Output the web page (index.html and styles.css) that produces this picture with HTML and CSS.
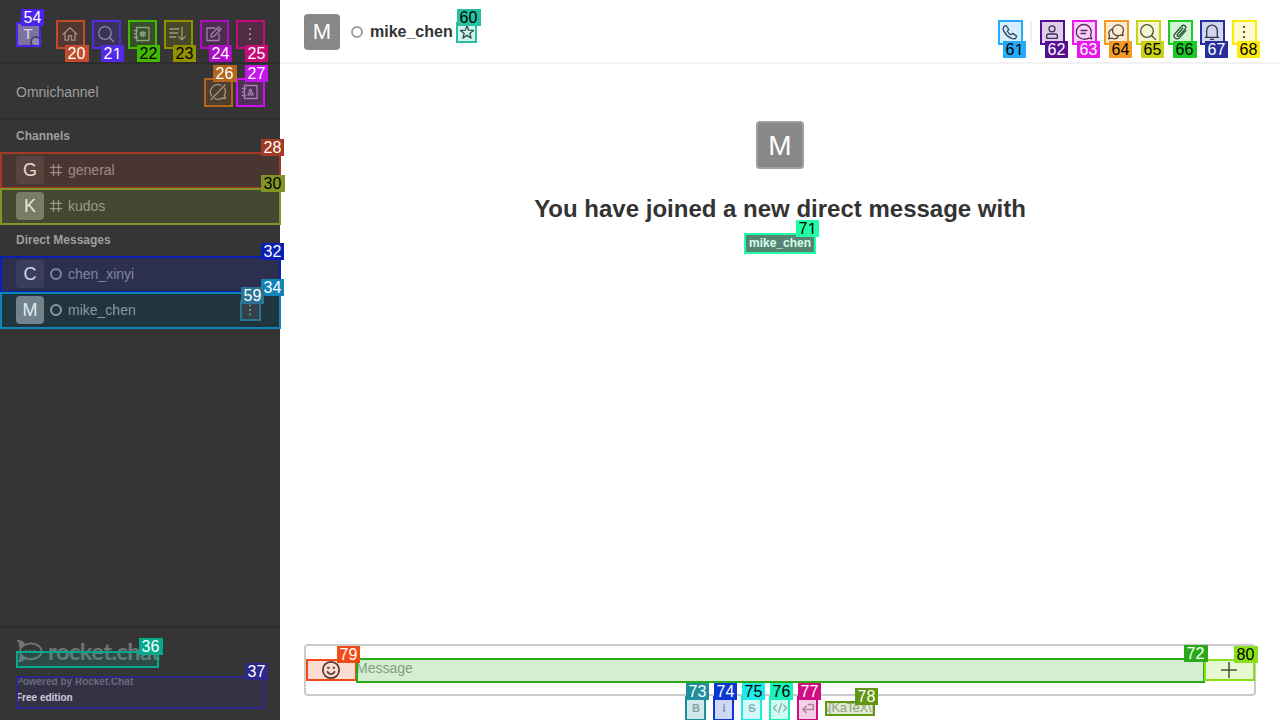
FILE: index.html
```html
<!DOCTYPE html>
<html lang="en">
<head>
<meta charset="utf-8">
<title>Rocket.Chat</title>
<link rel="stylesheet" href="styles.css">
</head>
<body>
<div class="app">
  <aside class="sidebar">
    <header class="side-head">
      <div class="avatar me">T<i class="badge"></i></div>
      <nav class="tools">
        <svg class="icon" viewBox="0 0 20 20"><path d="M3 10.3 10 3.8l7 6.5M5 9v7.2h3.500v-4.500h3v4.500H15V9"/></svg>
        <svg class="icon" viewBox="0 0 20 20"><circle cx="9" cy="9" r="6.300"/><path d="m13.500 13.500 4 4"/></svg>
        <svg class="icon" viewBox="0 0 20 20"><path d="M4.500 3.500h12.500v13H4.500zM2.300 6.500h3.400M2.300 13.500h3.400M2.300 10h2M9.500 7.500v5M11.800 7.500v5M8 9h5.500M8 11.200h5.500"/></svg>
        <svg class="icon" viewBox="0 0 20 20"><path d="M1.800 5h9M1.800 9h8M1.800 13h6M14 3.500v12M10.800 12.600l3.200 3.200 3.200-3.200"/></svg>
        <svg class="icon" viewBox="0 0 20 20"><path d="M11 4H3v12.500h12V10M7 13l.6-3 7-7 2.400 2.300-7 7zM13 4.800l2.300 2.200"/></svg>
        <svg class="icon dots" viewBox="0 0 20 20"><path d="M9 4h2v2H9zM9 9h2v2H9zM9 14h2v2H9z"/></svg>
      </nav>
    </header>
    <section class="omni">
      <span>Omnichannel</span>
      <nav class="tools">
        <svg class="icon" viewBox="0 0 20 20"><path d="M13 3.300A7.300 7.300 0 0 0 3.800 14M6.500 16.500c2.300 1.100 5.500 1 7.500-.5l3.500.5-1.200-3.300c1.400-2.200 1.300-5 .3-7M3 17.500 17 3"/></svg>
        <svg class="icon" viewBox="0 0 20 20"><path d="M4.500 3.500h12.500v13H4.500zM2.300 6.500h3.400M2.300 13.500h3.400M2.300 10h2M8 12.800v-1l1.300-1h2.400l1.300 1v1z"/><circle cx="10.500" cy="8.500" r="1.200"/></svg>
      </nav>
    </section>
    <h3 class="group">Channels</h3>
    <div class="room"><span class="avatar">G</span><svg class="sym" viewBox="0 0 12 12"><path d="M3.500 0v12M8.500 0v12M0 3.300h12M0 8.700h12"/></svg><span>general</span></div>
    <div class="room"><span class="avatar lite">K</span><svg class="sym" viewBox="0 0 12 12"><path d="M3.500 0v12M8.500 0v12M0 3.300h12M0 8.700h12"/></svg><span>kudos</span></div>
    <h3 class="group">Direct Messages</h3>
    <div class="room"><span class="avatar">C</span><i class="ring"></i><span>chen_xinyi</span></div>
    <div class="room current"><span class="avatar pale">M</span><i class="ring"></i><span>mike_chen</span><svg class="icon dots menu" viewBox="0 0 20 20"><path d="M9.200 4.500H11v1.800H9.200zM9.200 9H11v1.800H9.200zM9.200 13.500H11v1.800H9.200z"/></svg></div>
    <footer class="side-foot">
      <div class="brand">
        <svg class="logo" viewBox="0 0 28 26"><ellipse cx="14.800" cy="13.300" rx="10.800" ry="7.900"/><path class="fin" d="M.5 2.300C4 1.500 7 3 9 5.500L4.500 10.500 3 8.500C3.500 6 2.500 4 .5 2.300zM1 23.800c2-1.500 3-3.500 2.300-6.300l1.700-1.500 4.500 5C7.500 23.500 4.500 25 1 23.800z"/><circle cx="9.800" cy="13" r=".6"/><circle cx="14.300" cy="13" r=".6"/><circle cx="18.800" cy="13" r=".6"/></svg>
        <span class="wordmark">rocket.chat</span>
      </div>
      <p class="powered">Powered by Rocket.Chat</p>
      <p class="edition">Free edition</p>
    </footer>
  </aside>

  <main class="main">
    <header class="room-head">
      <span class="avatar large">M</span>
      <i class="ring"></i>
      <h1 class="name">mike_chen</h1>
      <svg class="star" viewBox="0 0 16 16"><path d="m8 1.800 1.700 4.400 4.800.200-3.700 3 1.300 4.700L8 11.400l-4.100 2.700 1.300-4.700-3.700-3 4.800-.200z"/></svg>
      <nav class="actions">
        <svg class="icon phone" viewBox="0 0 20 20"><path d="M3.700 4.600 6 3.500l2.700 3.900-1.400 1.900c.9 1.600 1.900 2.600 3.500 3.500l1.900-1.400 3.900 2.700-1 2.300c-1.300.8-3.100.5-4.600-.2-3.300-1.600-5.500-3.800-7.100-7.100C3.200 7.500 2.900 5.900 3.700 4.600z"/></svg>
        <i class="sep"></i>
        <svg class="icon" viewBox="0 0 20 20"><circle cx="10" cy="6.800" r="3"/><path d="M4.700 16.300V14q0-2 2-2h6.600q2 0 2 2v2.300z"/></svg>
        <svg class="icon" viewBox="0 0 20 20"><path d="M17.800 16.800 15 16.200C9.500 19 2.300 15.500 2.300 10a7.500 7.500 0 0 1 15 0c0 1.300-.4 2.500-.8 3.500zM7 8.500h6M7 11.500h4.500"/></svg>
        <svg class="icon" viewBox="0 0 20 20"><path d="M17 13.500l-2.500-.5c-4 1.800-8-.5-8-4.700a5.500 5.500 0 0 1 11 0c0 1-.3 1.900-.9 2.600zM6 7.200c-2.700 1.300-3.800 4-2.500 6.800l-.8 2.800 3.200-.6c2.800 1.200 5.400.5 6.600-2.200"/></svg>
        <svg class="icon" viewBox="0 0 20 20"><circle cx="9" cy="9" r="6.300"/><path d="m13.500 13.500 4 4"/></svg>
        <svg class="icon" viewBox="0 0 20 20"><path d="m12.800 6.300-5.400 6.200c-1 1.300.6 2.600 1.700 1.400l5.900-6.700c2.200-2.700-1-5.300-3.300-3L5.100 11.500c-3 3.600 1.200 7.300 4.500 4.100l6.200-7"/></svg>
        <svg class="icon" viewBox="0 0 20 20"><path d="M3.300 15.300h13.400M4.700 15V8.500a5.300 5.300 0 0 1 10.600 0V15M8.500 17.300h3"/></svg>
        <svg class="icon dots" viewBox="0 0 20 20"><path d="M9 4h2v2H9zM9 9h2v2H9zM9 14h2v2H9z"/></svg>
      </nav>
    </header>
    <section class="intro">
      <span class="avatar hero">M</span>
      <h2 class="title">You have joined a new direct message with</h2>
      <span class="user">mike_chen</span>
    </section>
    <div class="composer">
      <svg class="emoji" viewBox="0 0 20 20"><circle cx="10" cy="10" r="8.200"/><path d="M6.500 11.800c1.300 3 5.700 3 7 0"/><circle cx="7.200" cy="7.800" r=".7"/><circle cx="12.800" cy="7.800" r=".7"/></svg>
      <span class="input">Message</span>
      <svg class="plus" viewBox="0 0 20 20"><path d="M10 2.500v15M2.500 10h15"/></svg>
    </div>
    <div class="format">
      <b>B</b><b>i</b><b><s>S</s></b>
      <svg viewBox="0 0 16 16"><path d="M4.300 5 1.500 8l2.800 3M11.700 5l2.800 3-2.800 3M9.500 3.500l-3 9"/></svg>
      <svg class="enter" viewBox="0 0 16 16"><path d="M6 6.500 3 9.500l3 3M3 9.500h10.300V4.500H8.500"/></svg>
      <span class="katex">\[KaTeX\]</span>
    </div>
  </main>
</div>

<div class="marks">
  <div class="box b54"></div><div class="box b20"></div><div class="box b21"></div><div class="box b22"></div><div class="box b23"></div><div class="box b24"></div><div class="box b25"></div><div class="box b26"></div><div class="box b27"></div>
  <div class="box b28"></div><div class="box b30"></div><div class="box b32"></div><div class="box b34"></div><div class="box b59"></div><div class="box b36"></div><div class="box b37"></div>
  <div class="box b60"></div><div class="box b61"></div><div class="box b62"></div><div class="box b63"></div><div class="box b64"></div><div class="box b65"></div><div class="box b66"></div><div class="box b67"></div><div class="box b68"></div>
  <div class="box b71"></div><div class="box b79"></div><div class="box b72"></div><div class="box b80"></div><div class="box b73"></div><div class="box b74"></div><div class="box b75"></div><div class="box b76"></div><div class="box b77"></div><div class="box b78"></div>
  <span class="tag t54">54</span><span class="tag t20">20</span><span class="tag t21">2<span class="one">1</span></span><span class="tag dark t22">22</span><span class="tag dark t23">23</span><span class="tag t24">24</span><span class="tag t25">25</span><span class="tag t26">26</span><span class="tag t27">27</span>
  <span class="tag t28">28</span><span class="tag dark t30">30</span><span class="tag t32">32</span><span class="tag t34">34</span><span class="tag t59">59</span><span class="tag t36">36</span><span class="tag t37">37</span>
  <span class="tag dark t60">60</span><span class="tag dark t61">6<span class="one">1</span></span><span class="tag t62">62</span><span class="tag t63">63</span><span class="tag dark t64">64</span><span class="tag dark t65">65</span><span class="tag dark t66">66</span><span class="tag t67">67</span><span class="tag dark t68">68</span>
  <span class="tag dark t71">7<span class="one">1</span></span><span class="tag t72">72</span><span class="tag t79">79</span><span class="tag dark t80">80</span><span class="tag t73">73</span><span class="tag t74">74</span><span class="tag dark t75">75</span><span class="tag dark t76">76</span><span class="tag t77">77</span><span class="tag t78">78</span>
</div>
</body>
</html>
```
FILE: styles.css
```css
* { box-sizing: border-box; margin: 0; padding: 0; }
body { width: 1280px; height: 720px; overflow: hidden; font: 14px/20px "Liberation Sans", Arial, sans-serif; background: #fff; }
svg { flex: none; fill: none; stroke: currentColor; stroke-width: 1.3; stroke-linecap: round; stroke-linejoin: round; }
i { display: block; flex: none; }
.app { display: flex; height: 720px; }

.sidebar { width: 280px; flex: none; display: flex; flex-direction: column; background: #353535; color: #9e9e9e; }
.side-head { display: flex; justify-content: space-between; align-items: center; height: 64px; padding: 6px 16px 0; border-bottom: 2px solid #2d2d2d; }
.tools { display: flex; gap: 8px; }
.icon { width: 20px; height: 20px; }
.tools .icon { width: 28px; height: 28px; padding: 4px; }
.dots { fill: currentColor; stroke: none; }
.avatar { display: flex; flex: none; align-items: center; justify-content: center; width: 28px; height: 28px; border-radius: 4px; background: #464646; color: #fff; font-size: 18px; }
.me { position: relative; width: 24px; height: 24px; background: #888; font-size: 15px; border-radius: 2px; }
.badge { position: absolute; left: 14px; top: 14px; width: 12px; height: 12px; border: 2px solid #4a4a4a; border-radius: 50%; background: #a4a4a4; }
.omni { display: flex; justify-content: space-between; align-items: center; height: 56px; padding: 2px 16px 0; border-bottom: 2px solid #2d2d2d; }
.omni .tools { gap: 4px; }
.group { height: 32px; padding: 0 16px; font-size: 12px; line-height: 32px; }
.room { display: flex; align-items: center; height: 36px; padding: 0 20px 0 16px; color: #9e9e9e; }
.current { background: #24292b; }
.lite { background: #777; }
.pale { background: #848484; }
.sym { width: 12px; height: 12px; margin: 0 6px; stroke-width: 1.2; stroke-linecap: butt; }
.ring { width: 12px; height: 12px; margin: 0 6px; border: 2px solid #9e9e9e; border-radius: 50%; }
.menu { margin-left: auto; }
.side-foot { margin-top: auto; height: 94px; padding: 10px 16px 0; border-top: 2px solid #2d2d2d; font-size: 10px; font-weight: bold; line-height: 16px; }
.brand { display: flex; align-items: center; gap: 4px; height: 26px; margin-bottom: 10px; color: #747474; }
.logo { width: 28px; height: 26px; stroke-width: 2; }
.logo circle { fill: currentColor; stroke-width: 1; }
.fin { fill: currentColor; stroke: none; }
.wordmark { font: 700 23.5px/24px Lato, sans-serif; letter-spacing: -.5px; }
.powered { color: #7c7c7c; }
.edition { color: #f2f2f2; }

.main { flex: 1; display: flex; flex-direction: column; color: #2f343d; }
.room-head { display: flex; align-items: center; height: 64px; padding: 2px 26px 0 24px; border-bottom: 2px solid #f2f2f2; }
.large { width: 36px; height: 36px; background: #888; color: #fff; font-size: 22px; }
.room-head .ring { margin: 0 7px 0 11px; }
.name { font-size: 16px; line-height: 24px; color: #333; }
.star { width: 16px; height: 16px; margin-left: 6px; }
.actions { display: flex; align-items: center; gap: 12px; margin-left: auto; }
.phone { margin-right: -2px; }
.sep { width: 2px; height: 20px; margin: 0 -2px 0 0; background: #eee; }
.intro { flex: 1; display: flex; flex-direction: column; align-items: center; padding-top: 57px; }
.hero { width: 48px; height: 48px; padding-top: 1px; border: 2px solid #a0a0a0; background: #888; color: #fff; font-size: 28px; }
.title { margin-top: 24px; font-size: 24px; line-height: 32px; color: #333; }
.user { margin-top: 9px; padding: 0 4px; height: 19px; background: #666; color: #fff; font: bold 12px/18px "Liberation Sans", sans-serif; }
.composer { display: flex; align-items: center; height: 52px; margin: 0 24px; padding: 0 15px; border: 2px solid #cbcbcb; border-radius: 4px; }
.emoji, .plus { width: 20px; height: 20px; stroke-width: 1.7; }
.emoji circle + path ~ circle { fill: currentColor; stroke-width: 1; }
.plus { stroke-width: 1.5; }
.input { flex: 1; margin-left: 15px; padding-bottom: 4px; color: #9b9b9b; }
.format { display: flex; align-items: center; gap: 12px; height: 24px; padding-left: 408px; color: #a5a5a5; font-size: 11px; }
.format b, .format svg { width: 16px; height: 16px; text-align: center; line-height: 17px; }
.format .enter { stroke-width: 1.7; }
.katex { margin-left: -3px; font-size: 13px; line-height: 20px; letter-spacing: -.4px; white-space: nowrap; }

.marks { position: absolute; inset: 0; overflow: hidden; }
.box { position: absolute; width: 25px; height: 25px; top: 20px; border: 2px solid var(--c); background: color-mix(in srgb, var(--c) 20%, transparent); background-clip: padding-box; }
.tag { position: absolute; width: 23px; height: 17px; padding-left: 2.5px; background: var(--c); color: #fff; font: 16px/17px "Liberation Sans", Arial, sans-serif; white-space: nowrap; }
.one { font: 15px/15px Inter, sans-serif; margin-left: 1px; }
.dark { color: #000; }
.b20, .b21, .b22, .b23, .b24, .b25, .b26, .b27 { width: 29px; height: 29px; }
.t20, .t21, .t22, .t23, .t24, .t25 { top: 45px; }
.b26, .b27 { top: 78px; } .t26, .t27 { top: 65px; }
.b28, .b30, .b32, .b34 { left: 0; width: 281px; height: 37px; }
.t28, .t30, .t32, .t34 { left: 261px; }
.t61, .t62, .t63, .t64, .t65, .t66, .t67, .t68 { top: 41px; }
.b73, .b74, .b75, .b76, .b77 { top: 696px; width: 21px; }
.t73, .t74, .t75, .t76, .t77 { top: 683px; }
.t20, .t26, .t30, .t36, .t60, .t66, .t72, .t80 { width: 24px; }
.b54, .t54 { --c: #4a24ed; } .b54 { left: 16px; top: 22px; } .t54 { left: 21px; top: 9px; }
.b20, .t20 { --c: #c24b29; } .b20 { left: 56px; } .t20 { left: 65px; }
.b21, .t21 { --c: #542ae8; } .b21 { left: 92px; } .t21 { left: 101px; }
.b22, .t22 { --c: #43b900; } .b22 { left: 128px; } .t22 { left: 137px; }
.b23, .t23 { --c: #928f00; } .b23 { left: 164px; } .t23 { left: 173px; }
.b24, .t24 { --c: #ad0cc4; } .b24 { left: 200px; } .t24 { left: 209px; }
.b25, .t25 { --c: #c70c79; } .b25 { left: 236px; } .t25 { left: 245px; }
.b26, .t26 { --c: #b3661c; } .b26 { left: 204px; } .t26 { left: 213px; }
.b27, .t27 { --c: #c713ee; } .b27 { left: 236px; } .t27 { left: 245px; }
.b28, .t28 { --c: #a13b24; } .b28 { top: 152px; } .t28 { top: 139px; }
.b30, .t30 { --c: #829425; } .b30 { top: 188px; } .t30 { top: 175px; }
.b32, .t32 { --c: #0820b6; } .b32 { top: 256px; } .t32 { top: 243px; }
.b34, .t34 { --c: #1083b9; } .b34 { top: 292px; background: rgba(16, 131, 185, .14); background-clip: padding-box; } .t34 { top: 279px; }
.b59, .t59 { --c: #2a7395; } .b59 { left: 240px; top: 300px; width: 21px; height: 21px; background: rgba(120, 110, 110, .22); } .t59 { left: 241px; top: 287px; }
.b36, .t36 { --c: #06a98b; } .b36 { left: 16px; top: 651px; width: 143px; height: 17px; } .t36 { left: 139px; top: 638px; }
.b37, .t37 { --c: #2d2789; } .b37 { left: 16px; top: 676px; width: 249px; height: 33px; } .t37 { left: 245px; top: 663px; }
.b60, .t60 { --c: #24c2a0; } .b60 { left: 456px; top: 22px; width: 21px; height: 21px; } .t60 { left: 457px; top: 9px; }
.b61, .t61 { --c: #26a9fb; } .b61 { left: 998px; } .t61 { left: 1003px; }
.b62, .t62 { --c: #560f90; } .b62 { left: 1040px; } .t62 { left: 1045px; }
.b63, .t63 { --c: #e619e8; } .b63 { left: 1072px; } .t63 { left: 1077px; }
.b64, .t64 { --c: #f39a25; } .b64 { left: 1104px; } .t64 { left: 1109px; }
.b65, .t65 { --c: #c9d216; } .b65 { left: 1136px; } .t65 { left: 1141px; }
.b66, .t66 { --c: #1bcb25; } .b66 { left: 1168px; } .t66 { left: 1173px; }
.b67, .t67 { --c: #25309b; } .b67 { left: 1200px; } .t67 { left: 1205px; }
.b68, .t68 { --c: #fcea0b; } .b68 { left: 1232px; } .t68 { left: 1237px; }
.b71, .t71 { --c: #20ffa5; } .b71 { left: 744px; top: 233px; width: 72px; height: 21px; } .t71 { left: 796px; top: 220px; }
.b72, .t72 { --c: #2aaa18; } .b72 { left: 356px; top: 658px; width: 849px; height: 25px; } .t72 { left: 1184px; top: 645px; }
.b79, .t79 { --c: #f14a16; } .b79 { left: 306px; top: 659px; width: 51px; height: 22px; } .t79 { left: 337px; top: 646px; }
.b80, .t80 { --c: #88e018; } .b80 { left: 1204px; top: 659px; width: 51px; height: 22px; } .t80 { left: 1234px; top: 646px; }
.b73, .t73 { --c: #208f9d; } .b73 { left: 685px; } .t73 { left: 686px; }
.b74, .t74 { --c: #0b38d3; } .b74 { left: 713px; } .t74 { left: 714px; }
.b75, .t75 { --c: #1cebe8; } .b75 { left: 741px; } .t75 { left: 742px; }
.b76, .t76 { --c: #1af2bc; } .b76 { left: 769px; } .t76 { left: 770px; }
.b77, .t77 { --c: #d10d84; } .b77 { left: 797px; } .t77 { left: 798px; }
.b78, .t78 { --c: #609612; } .b78 { left: 825px; top: 701px; width: 50px; height: 15px; } .t78 { left: 855px; top: 688px; }
```
